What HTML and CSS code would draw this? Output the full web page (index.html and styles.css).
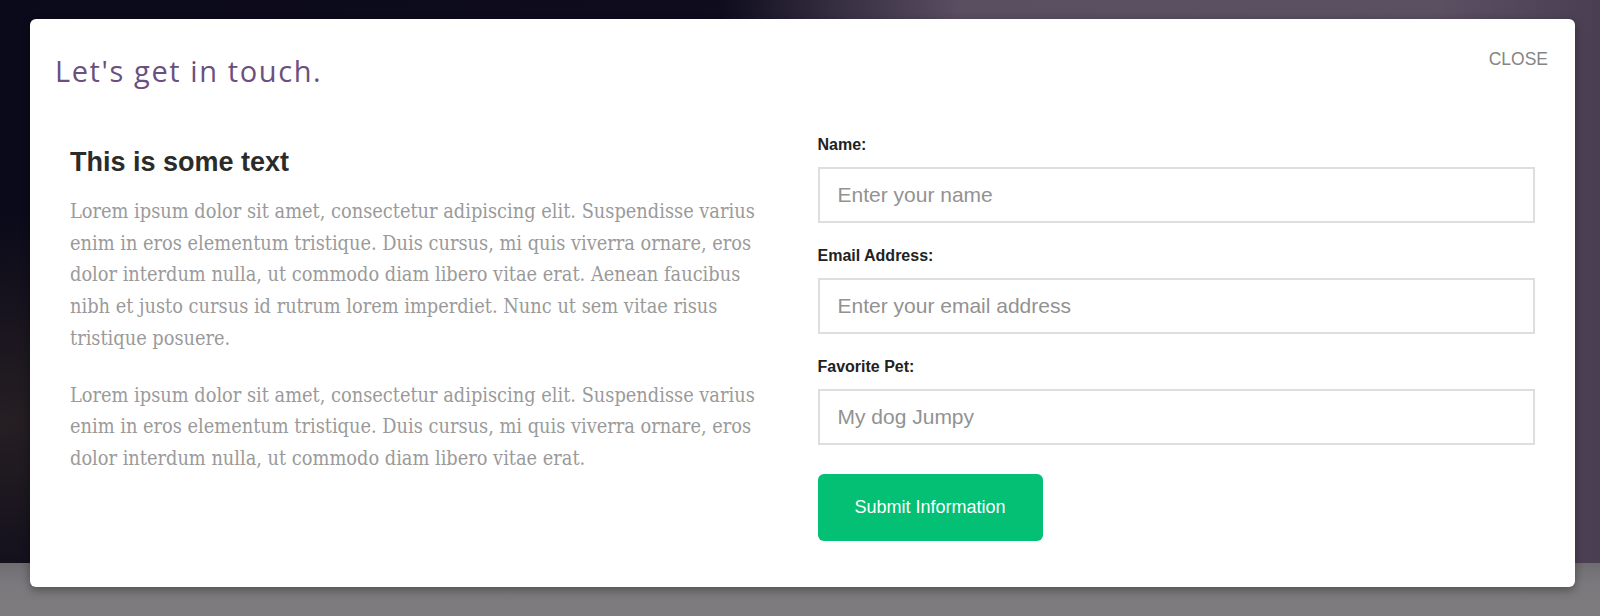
FILE: index.html
```html
<!DOCTYPE html>
<html lang="en">
<head>
<meta charset="utf-8">
<title>Let's get in touch</title>
<link rel="stylesheet" href="styles.css">
</head>
<body>
<div class="backdrop">
  <div class="backdrop-photo"></div>
  <div class="backdrop-footer"></div>
</div>
<div class="modal">
  <div class="modal-header">
    <h1 class="modal-title">Let's get in touch.</h1>
    <a class="modal-close" href="#">CLOSE</a>
  </div>
  <div class="modal-body">
    <div class="col col-text">
      <h2 class="text-heading">This is some text</h2>
      <p class="text-para">Lorem ipsum dolor sit amet, consectetur adipiscing elit. Suspendisse varius enim in eros elementum tristique. Duis cursus, mi quis viverra ornare, eros dolor interdum nulla, ut commodo diam libero vitae erat. Aenean faucibus nibh et justo cursus id rutrum lorem imperdiet. Nunc ut sem vitae risus tristique posuere.</p>
      <p class="text-para">Lorem ipsum dolor sit amet, consectetur adipiscing elit. Suspendisse varius enim in eros elementum tristique. Duis cursus, mi quis viverra ornare, eros dolor interdum nulla, ut commodo diam libero vitae erat.</p>
    </div>
    <form class="col col-form">
      <label class="field-label" for="name">Name:</label>
      <input class="field-input" id="name" type="text" placeholder="Enter your name">
      <label class="field-label" for="email">Email Address:</label>
      <input class="field-input" id="email" type="email" placeholder="Enter your email address">
      <label class="field-label" for="pet">Favorite Pet:</label>
      <input class="field-input" id="pet" type="text" placeholder="My dog Jumpy">
      <button class="submit-btn" type="button">Submit Information</button>
    </form>
  </div>
</div>
</body>
</html>
```

FILE: styles.css
```css
* { box-sizing: border-box; }

html, body {
  margin: 0;
  padding: 0;
  width: 1600px;
  height: 616px;
  overflow: hidden;
}

body {
  font-family: "Liberation Sans", Arial, sans-serif;
  position: relative;
}

.backdrop {
  display: flex;
  flex-direction: column;
  height: 616px;
}

.backdrop-photo {
  height: 563px;
  background:
    radial-gradient(ellipse 500px 300px at 0% 75%, rgba(70,55,45,0.45), rgba(70,55,45,0) 70%),
    linear-gradient(90deg, #0b0a1a 0%, #0e0c1d 45%, #3a3145 53%, #5a4e61 60%, #5b4f62 90%, #4a3f52 100%);
}

.backdrop-footer {
  flex: 1;
  background: linear-gradient(180deg, #6f6d71 0%, #7b797c 40%, #7d7b7e 100%);
}

.modal {
  position: absolute;
  left: 30px;
  top: 19px;
  width: 1545px;
  height: 568px;
  background: #fff;
  border-radius: 6px;
  box-shadow: 0 3px 10px rgba(0,0,0,0.35);
  padding: 30px 25px 0 25px;
}

.modal-header {
  display: flex;
  justify-content: space-between;
  align-items: flex-start;
}

.modal-title {
  margin: 4px 0 0 0;
  font-family: "Open Sans", "Liberation Sans", sans-serif;
  font-weight: 400;
  font-size: 29px;
  line-height: 36px;
  letter-spacing: 1.6px;
  color: #6a5080;
}

.modal-close {
  font-family: "Liberation Sans", Arial, sans-serif;
  font-size: 17.5px;
  line-height: 20px;
  color: #858585;
  text-decoration: none;
  margin-right: 2px;
}

.modal-body {
  display: flex;
  margin-top: 46px;
}

.col {
  flex: 1 1 0;
  min-width: 0;
  padding: 0 15px;
}

.text-heading {
  margin: 11px 0 18px 0;
  font-family: "Liberation Sans", Arial, sans-serif;
  font-weight: 700;
  font-size: 27px;
  line-height: 32px;
  color: #2b2b2b;
}

.text-para {
  max-width: 697px;
  margin: 0 0 25px 0;
  font-family: "DejaVu Serif", "Liberation Serif", serif;
  font-stretch: semi-condensed;
  font-size: 19.8px;
  line-height: 31.7px;
  color: #9a9a9a;
}

.col-form {
  display: flex;
  flex-direction: column;
  align-items: stretch;
}

.field-label {
  display: block;
  font-family: "Liberation Sans", Arial, sans-serif;
  font-weight: 700;
  font-size: 16px;
  line-height: 20px;
  color: #222;
  margin-bottom: 12px;
}

.field-input {
  display: block;
  width: 100%;
  height: 56px;
  border: 2px solid #dedee0;
  border-radius: 0;
  padding: 0 18px;
  font-family: "Liberation Sans", Arial, sans-serif;
  font-size: 21px;
  color: #333;
  background: #fff;
  margin: 0 0 23px 0;
  outline: none;
}

.field-input::placeholder {
  color: #929292;
}

.submit-btn {
  align-self: flex-start;
  margin-top: 6px;
  width: 225px;
  height: 67px;
  border: none;
  border-radius: 6px;
  background: #03c074;
  color: #fff;
  font-family: "Liberation Sans", Arial, sans-serif;
  font-size: 18px;
  cursor: pointer;
}
```
